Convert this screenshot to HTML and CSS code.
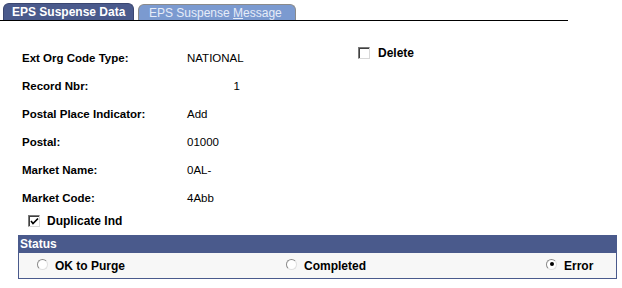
FILE: index.html
```html
<!DOCTYPE html>
<html lang="en">
<head>
  <meta charset="UTF-8" />
  <title>EPS Suspense Data</title>
  <link rel="stylesheet" href="styles.css">
</head>
<body>
  <div class="tabs">
    <div class="tab active">EPS Suspense Data</div>
    <div class="tab">EPS Suspense <u>M</u>essage</div>
  </div>

  <div class="form">
    <div class="label">Ext Org Code Type:</div>
    <div class="value">NATIONAL</div>
    <div class="check top">
      <span class="box"></span>Delete
    </div>

    <div class="label">Record Nbr:</div>
    <div class="value"><span class="num">1</span></div>
    <div></div>

    <div class="label">Postal Place Indicator:</div>
    <div class="value">Add</div>
    <div></div>

    <div class="label">Postal:</div>
    <div class="value">01000</div>
    <div></div>

    <div class="label">Market Name:</div>
    <div class="value">0AL-</div>
    <div></div>

    <div class="label">Market Code:</div>
    <div class="value">4Abb</div>
    <div></div>
  </div>

  <div class="check dup">
    <span class="box">
      <svg width="9" height="9" viewBox="0 0 9 9"><path d="M1 4 L3 6.5 L8 1.5" fill="none" stroke="#000" stroke-width="1.6"/></svg>
    </span>Duplicate Ind
  </div>

  <div class="status">
    <div class="status-head">Status</div>
    <div class="status-body">
      <div class="radio-item"><span class="radio"></span>OK to Purge</div>
      <div class="radio-item"><span class="radio"></span>Completed</div>
      <div class="radio-item"><span class="radio on"></span>Error</div>
    </div>
  </div>
</body>
</html>
```

FILE: styles.css
```css
* {
  box-sizing: border-box;
}

body {
  margin: 0;
  background: #fff;
  font-family: "Liberation Sans", Arial, sans-serif;
  font-size: 11.5px;
  color: #000;
}

.tabs {
  display: flex;
  align-items: flex-end;
  width: 568px;
  height: 21px;
  padding-left: 3px;
  border-bottom: 1px solid #000;
}

.tab {
  height: 16px;
  width: 158px;
  margin-left: 4px;
  padding-left: 10px;
  line-height: 16px;
  font-size: 12px;
  color: #e6ecf8;
  background: #7b9ad0;
  border: 1px solid #8a8a8a;
  border-bottom: none;
  border-radius: 6px 6px 0 0;
}

.tab.active {
  height: 17px;
  width: 131px;
  margin-left: 0;
  padding-left: 8px;
  font-weight: bold;
  color: #fff;
  background: #4a5a8c;
  border-color: #3a4670;
}

.form {
  display: grid;
  grid-template-columns: 165px 171px auto;
  grid-auto-rows: 28px;
  align-items: center;
  margin-top: 23px;
  padding-left: 22px;
}

.label {
  font-weight: bold;
}

.num {
  display: inline-block;
  width: 53px;
  text-align: right;
}

.check {
  display: flex;
  align-items: center;
  font-size: 12px;
  font-weight: bold;
}

.check.top {
  align-self: start;
  margin-top: 2px;
}

.box {
  display: inline-flex;
  align-items: center;
  justify-content: center;
  width: 12px;
  height: 12px;
  margin-right: 8px;
  background: #fff;
  border: 1px solid;
  border-color: #7a7a7a #d8d8d8 #d8d8d8 #7a7a7a;
  box-shadow: inset 1px 1px 0 #404040;
}

.dup {
  height: 18px;
  margin: 0 0 5px 28px;
}

.dup .box {
  margin-right: 7px;
}

.status {
  width: 599px;
  margin-left: 18px;
  border: 1px solid #4a5a8c;
}

.status-head {
  height: 17px;
  padding-left: 1px;
  line-height: 16px;
  font-size: 12px;
  font-weight: bold;
  color: #fff;
  background: #4a5a8c;
}

.status-body {
  display: grid;
  grid-template-columns: 249px 260px auto;
  align-items: center;
  height: 25px;
  padding-left: 18px;
  background: #f7f7f7;
}

.radio-item {
  display: flex;
  align-items: center;
  font-size: 12px;
  font-weight: bold;
}

.radio {
  position: relative;
  width: 11px;
  height: 11px;
  margin: -3px 7px 0 0;
  border-radius: 50%;
  background: #fff;
  border: 1px solid;
  border-color: #8a8a8a #e0e0e0 #e0e0e0 #8a8a8a;
}

.radio.on::after {
  content: "";
  position: absolute;
  left: 2.5px;
  top: 2.5px;
  width: 4px;
  height: 4px;
  border-radius: 50%;
  background: #000;
}
```
